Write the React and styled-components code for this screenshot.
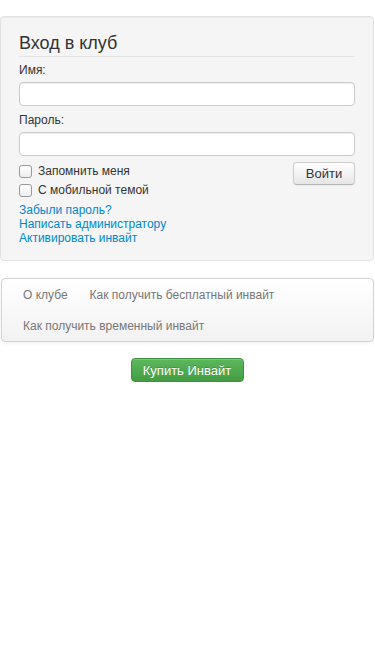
import React from "react";
import styled, { createGlobalStyle } from "styled-components";

const GlobalStyle = createGlobalStyle`
  body {
    margin: 0;
    background: #fff;
    font-family: "Liberation Sans", Arial, sans-serif;
    color: #333;
  }
`;

const Page = styled.div`
  padding: 16px 1px 0 0;
`;

const Well = styled.form`
  background-color: #f5f5f5;
  border: 1px solid #e3e3e3;
  border-radius: 4px;
  box-shadow: inset 0 1px 1px rgba(0, 0, 0, 0.05);
  padding: 16px 18px 15px;
`;

const Legend = styled.div`
  font-size: 18px;
  line-height: 20px;
  color: #333;
  padding-bottom: 3px;
  border-bottom: 1px solid #e5e5e5;
  margin-bottom: 5px;
`;

const Label = styled.label`
  display: block;
  font-size: 12px;
  line-height: 16px;
  margin-bottom: 4px;
`;

const Input = styled.input`
  display: block;
  box-sizing: border-box;
  width: 100%;
  height: 24px;
  margin: 0 0 6px;
  border: 1px solid #ccc;
  border-radius: 4px;
  background: #fff;
  box-shadow: inset 0 1px 1px rgba(0, 0, 0, 0.075);
  font: inherit;
`;

const Row = styled.div`
  display: flex;
  justify-content: space-between;
  align-items: flex-start;
  margin-top: 2px;
`;

const Checks = styled.div`
  display: flex;
  flex-direction: column;
  gap: 4px;
  margin-top: 2px;
`;

const Check = styled.label`
  display: flex;
  align-items: center;
  gap: 6px;
  font-size: 12px;
  line-height: 15px;
  color: #333;
`;

const Box = styled.span`
  width: 11px;
  height: 11px;
  border: 1px solid #999;
  border-radius: 3px;
  background: linear-gradient(#fff, #eee);
`;

const Button = styled.button`
  box-sizing: border-box;
  height: 23px;
  width: 62px;
  padding: 0;
  font: 13px "Liberation Sans", Arial, sans-serif;
  color: #333;
  border: 1px solid #ccc;
  border-bottom-color: #b3b3b3;
  border-radius: 4px;
  background: linear-gradient(#ffffff, #e6e6e6);
  box-shadow: inset 0 1px 0 rgba(255, 255, 255, 0.2), 0 1px 2px rgba(0, 0, 0, 0.05);
`;

const Links = styled.div`
  display: flex;
  flex-direction: column;
  margin-top: 5px;
`;

const Link = styled.a`
  font-size: 12px;
  line-height: 14px;
  color: #0088cc;
  text-decoration: none;
`;

const Nav = styled.nav`
  margin: 17px 0 0 1px;
  border: 1px solid #d4d4d4;
  border-radius: 4px;
  background: linear-gradient(#ffffff, #f2f2f2);
  box-shadow: 0 1px 4px rgba(0, 0, 0, 0.065);
  display: flex;
  flex-wrap: wrap;
  padding: 0 0 0 10px;
`;

const NavItem = styled.a`
  display: block;
  font-size: 12px;
  line-height: 15px;
  padding: 9px 11px 7px;
  color: #777;
  text-decoration: none;
`;

const Center = styled.div`
  display: flex;
  justify-content: center;
  margin-top: 16px;
`;

const BuyButton = styled.button`
  box-sizing: border-box;
  height: 24px;
  width: 113px;
  padding: 0;
  font: 13px "Liberation Sans", Arial, sans-serif;
  color: #fff;
  border: 1px solid #3e8f3e;
  border-radius: 4px;
  background: linear-gradient(#5cb85c, #449d44);
  text-shadow: 0 -1px 0 rgba(0, 0, 0, 0.2);
  box-shadow: inset 0 1px 0 rgba(255, 255, 255, 0.2), 0 1px 2px rgba(0, 0, 0, 0.05);
`;

export default function App() {
  return (
    <>
      <GlobalStyle />
      <Page>
        <Well>
          <Legend>Вход в клуб</Legend>
          <Label>Имя:</Label>
          <Input type="text" />
          <Label>Пароль:</Label>
          <Input type="password" />
          <Row>
            <Checks>
              <Check>
                <Box />
                Запомнить меня
              </Check>
              <Check>
                <Box />С мобильной темой
              </Check>
            </Checks>
            <Button type="button">Войти</Button>
          </Row>
          <Links>
            <Link href="#">Забыли пароль?</Link>
            <Link href="#">Написать администратору</Link>
            <Link href="#">Активировать инвайт</Link>
          </Links>
        </Well>
        <Nav>
          <NavItem href="#">О клубе</NavItem>
          <NavItem href="#">Как получить бесплатный инвайт</NavItem>
          <NavItem href="#">Как получить временный инвайт</NavItem>
        </Nav>
        <Center>
          <BuyButton type="button">Купить Инвайт</BuyButton>
        </Center>
      </Page>
    </>
  );
}
